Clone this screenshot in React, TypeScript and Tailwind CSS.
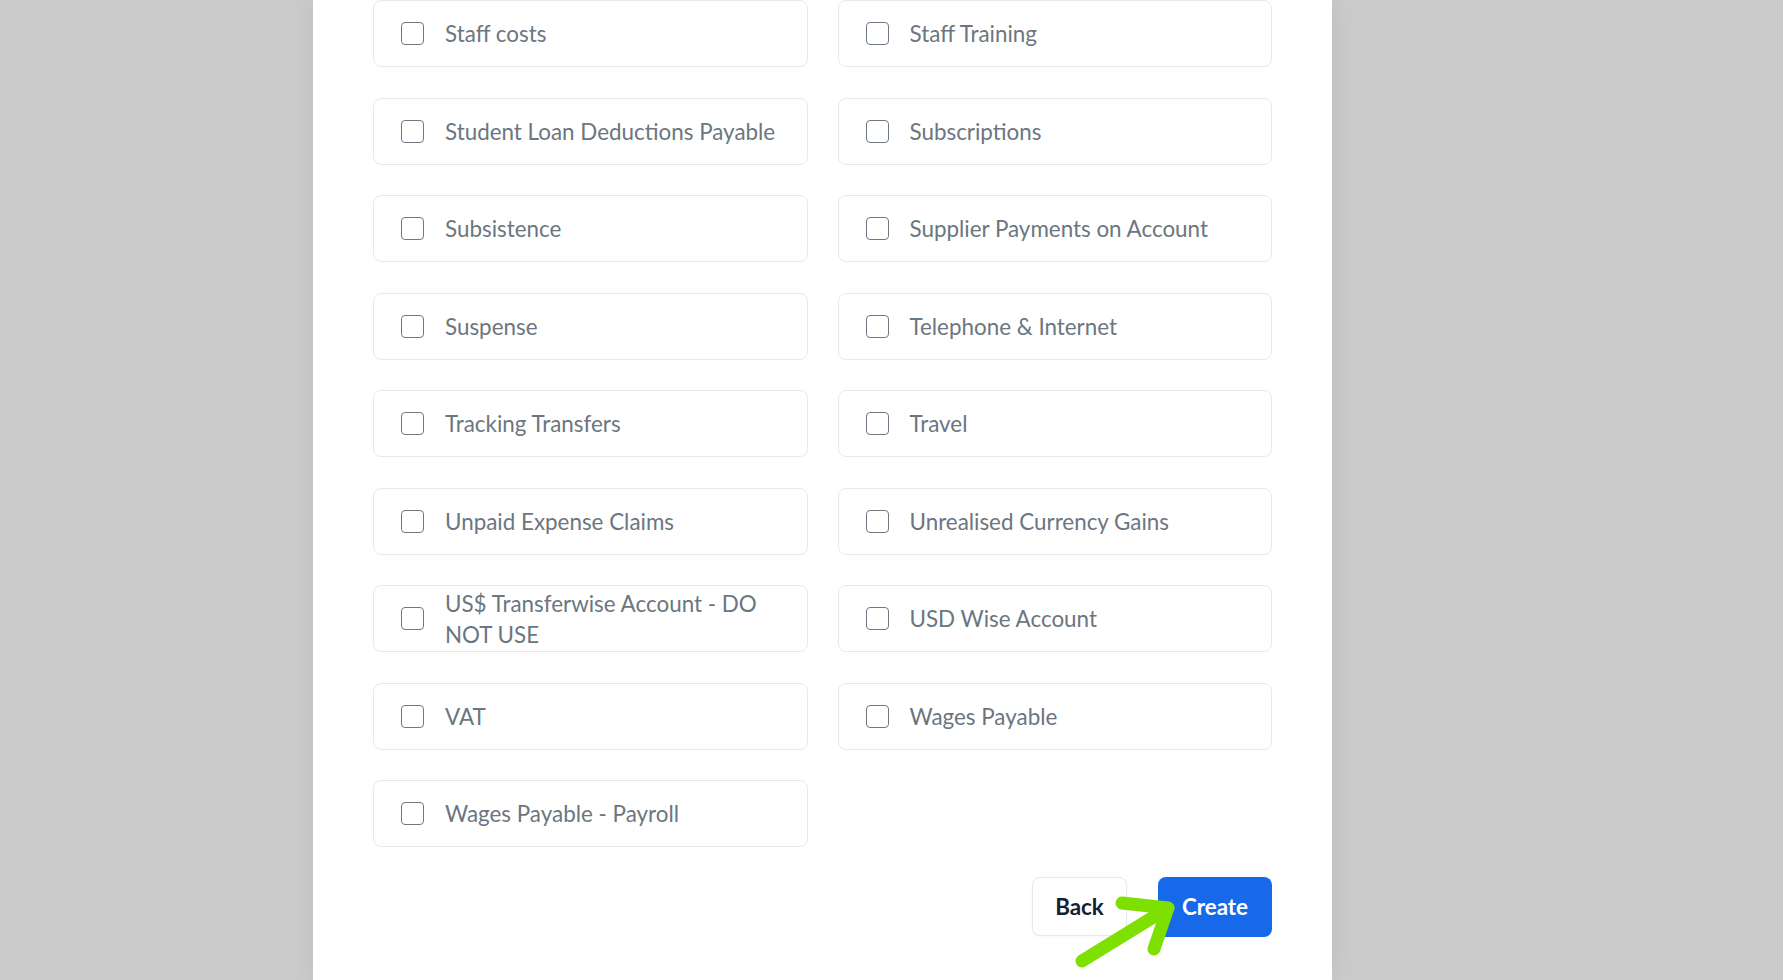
import React from "react";

const accounts = [
  "Staff costs",
  "Staff Training",
  "Student Loan Deductions Payable",
  "Subscriptions",
  "Subsistence",
  "Supplier Payments on Account",
  "Suspense",
  "Telephone & Internet",
  "Tracking Transfers",
  "Travel",
  "Unpaid Expense Claims",
  "Unrealised Currency Gains",
  "US$ Transferwise Account - DO NOT USE",
  "USD Wise Account",
  "VAT",
  "Wages Payable",
  "Wages Payable - Payroll",
];

function AccountOption({ label }: { label: string }) {
  return (
    <label className="flex h-[67px] items-center rounded-lg border border-[#e6eaef] bg-white pl-[27px] pr-[27px] cursor-pointer">
      <span className="size-[23px] shrink-0 rounded-[4px] border-[1.5px] border-[#6e7882] bg-white" />
      <span className="ml-[21px] text-[22.4px] leading-[31px] text-[#6b7680]">{label}</span>
    </label>
  );
}

export default function App() {
  return (
    <div
      className="relative h-screen w-full overflow-hidden bg-[#cbcbcb] pl-[313px]"
      style={{ fontFamily: "Lato, 'Noto Sans', sans-serif" }}
    >
      <div className="h-full w-[1019px] bg-white px-[60px] shadow-[0_0_24px_rgba(0,0,0,0.08)]">
        <div className="grid grid-cols-2 gap-x-[30px] gap-y-[30.5px]">
          {accounts.map((a) => (
            <AccountOption key={a} label={a} />
          ))}
        </div>

        <div className="mt-[30px] flex justify-end gap-[31px]">
          <button className="h-[59px] w-[95px] rounded-lg border border-[#e6eaef] bg-white text-[22.4px] font-bold text-[#152033] shadow-[0_1px_3px_rgba(0,0,0,0.04)]">
            Back
          </button>
          <button className="h-[60px] w-[114px] rounded-lg bg-[#1769ea] text-[22.4px] font-bold text-white">
            Create
          </button>
        </div>
      </div>

      {/* pointer arrow over the Create button */}
      <svg
        className="pointer-events-none absolute left-[1072px] top-[891px]"
        width="110"
        height="85"
        viewBox="0 0 110 85"
      >
        <g
          fill="none"
          stroke="#7ee000"
          strokeWidth="13"
          strokeLinecap="round"
          strokeLinejoin="round"
        >
          <path d="M10 70 L96 17" />
          <path d="M50 12 L96 17 L82 58" />
        </g>
      </svg>
    </div>
  );
}
